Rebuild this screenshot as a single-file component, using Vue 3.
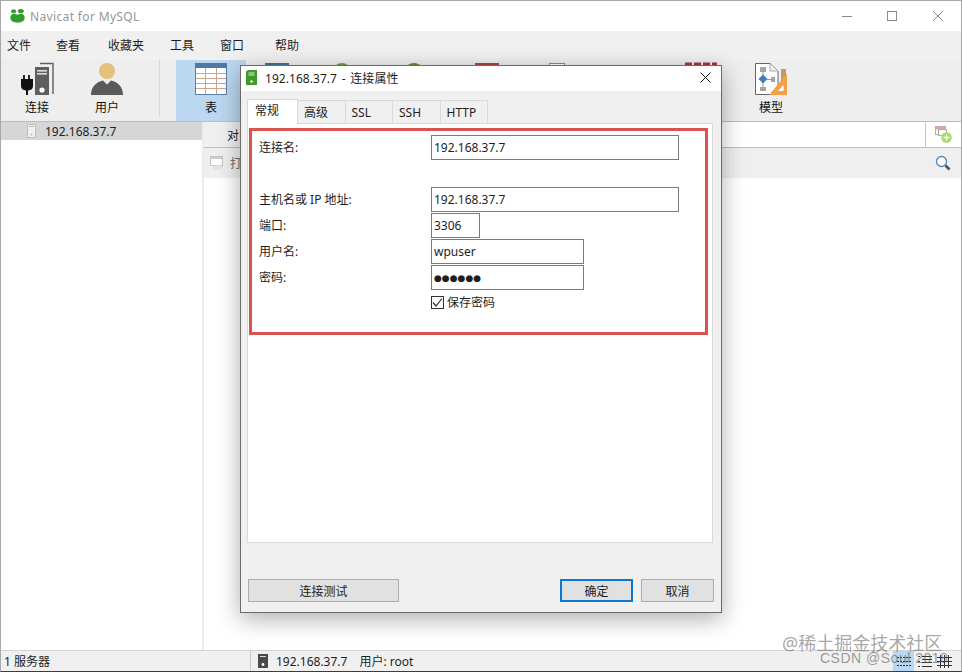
<script setup>
const menus = [
  { t: '文件', w: 49 }, { t: '查看', w: 52 }, { t: '收藏夹', w: 62 },
  { t: '工具', w: 50 }, { t: '窗口', w: 55 }, { t: '帮助', w: 30 }
]
const tabs = ['常规', '高级', 'SSL', 'SSH', 'HTTP']
const hostValue = '192.168.37.7'
</script>

<template>
  <div class="win">
    <header class="titlebar">
      <svg class="logo" width="15" height="14" viewBox="0 0 15 14">
        <path d="M0.3 9 Q0.5 5.5 4 4.6 Q7.5 6.8 11 4.6 Q14.5 5.5 14.7 9 Q14.2 13.6 7.5 13.7 Q0.8 13.6 0.3 9 Z" fill="#2f9e2f" />
        <ellipse cx="3.6" cy="2.2" rx="2.6" ry="1.9" fill="#2f9e2f" />
        <ellipse cx="10.8" cy="2" rx="3" ry="2" fill="#2f9e2f" />
      </svg>
      <span class="apptitle">Navicat for MySQL</span>
      <div class="winctl">
        <svg width="121" height="16" viewBox="0 0 121 16" fill="none" stroke="#8a8a8a">
          <path d="M10 8.5 H20" />
          <rect x="55.5" y="3.5" width="9" height="9" />
          <path d="M101 3 L111 13 M111 3 L101 13" />
        </svg>
      </div>
    </header>

    <nav class="menubar">
      <span v-for="m in menus" :key="m.t" class="menu" :style="{ width: m.w + 'px' }">{{ m.t }}</span>
    </nav>

    <section class="toolbar">
      <div class="tool">
        <svg width="48" height="36" viewBox="0 0 48 36">
          <path d="M27 2.5 H40 V33" fill="none" stroke="#5f5f5f" stroke-width="1.4" />
          <rect x="22" y="6" width="14" height="28" fill="#5e5e5e" />
          <rect x="24" y="9" width="10" height="1.6" fill="#ddd" />
          <rect x="24" y="12" width="10" height="1.6" fill="#ddd" />
          <circle cx="29" cy="29" r="2.6" fill="#fff" />
          <path d="M11 14 V18 M16 14 V18" stroke="#111" stroke-width="1.8" />
          <path d="M8 18 H20 V25 Q20 29 15 29.5 V34 H13 V29.5 Q8 29 8 25 Z" fill="#111" />
        </svg>
        <span>连接</span>
      </div>
      <div class="tool">
        <svg width="48" height="36" viewBox="0 0 48 36">
          <circle cx="24" cy="10" r="8" fill="#e4c07e" />
          <path d="M8 34 C8 26 13 21 20 19.5 L24 23.5 L28 19.5 C35 21 40 26 40 34 Z" fill="#5a5a5a" />
        </svg>
        <span>用户</span>
      </div>
      <i class="toolsep"></i>
      <div class="tool active">
        <svg width="48" height="36" viewBox="0 0 48 36">
          <rect x="8.5" y="2.5" width="31" height="31" fill="#fff" stroke="#5b7fa6" />
          <rect x="8" y="2" width="32" height="5" fill="#4f78a5" />
          <path d="M9 12.5 H39 M9 17.5 H39 M9 22.5 H39 M9 27.5 H39 M18.5 7 V33 M29.5 7 V33" stroke="#c9a58f" fill="none" />
        </svg>
        <span>表</span>
      </div>
      <div class="tool">
        <svg width="48" height="36" viewBox="0 0 48 36"><rect x="8" y="2" width="24" height="30" fill="#44709f" /></svg>
      </div>
      <div class="tool">
        <svg width="48" height="36" viewBox="0 0 48 36"><ellipse cx="15" cy="12" rx="10" ry="10" fill="#6d9a46" /></svg>
      </div>
      <div class="tool">
        <svg width="48" height="36" viewBox="0 0 48 36"><ellipse cx="17" cy="14" rx="11" ry="12" fill="#5f8f35" /></svg>
      </div>
      <div class="tool">
        <svg width="48" height="36" viewBox="0 0 48 36"><rect x="8" y="2" width="24" height="30" fill="#b3413f" /></svg>
      </div>
      <div class="tool">
        <svg width="48" height="36" viewBox="0 0 48 36"><rect x="12.5" y="2.5" width="15" height="30" fill="#fff" stroke="#888" /></svg>
      </div>
      <div class="tool"></div>
      <div class="tool">
        <svg width="48" height="36" viewBox="0 0 48 36"><path d="M8 3 H40" stroke="#a8323a" stroke-width="3" stroke-dasharray="7 2" /></svg>
      </div>
      <div class="tool">
        <svg width="48" height="36" viewBox="0 0 48 36">
          <path d="M8.5 2.5 H23 L31 10 V33.5 H8.5 Z" fill="#fff" stroke="#666" />
          <path d="M23 2.5 V10 H31" fill="#eee" stroke="#aaa" />
          <rect x="13" y="6" width="6" height="5" fill="#a5a5a5" />
          <rect x="24" y="16" width="4" height="5" fill="#a5a5a5" />
          <rect x="13" y="26" width="6" height="4" fill="#a5a5a5" />
          <path d="M16 11 V26 M20 18.5 H24" stroke="#999" />
          <path d="M16 13.5 L20.5 18 L16 22.5 L11.5 18 Z" fill="#3f7fc1" />
          <rect x="34" y="8" width="5" height="12" fill="#c49a6c" />
          <path d="M22 34 L40 34 L40 12.5 Z" fill="#f2a04a" />
          <path d="M31 30 L36.5 30 L36.5 24 Z" fill="#fff" />
        </svg>
        <span>模型</span>
      </div>
    </section>

    <main class="content">
      <aside class="tree">
        <div class="treerow">
          <svg width="10" height="14" viewBox="0 0 10 14">
            <rect x="0.5" y="0.5" width="8" height="13" fill="#f1f1f1" stroke="#bdbdbd" />
            <rect x="2" y="2" width="5" height="1" fill="#bbb" />
            <circle cx="4.5" cy="10.5" r="1" fill="#bbb" />
          </svg>
          <span>{{ hostValue }}</span>
        </div>
      </aside>
      <div class="pane">
        <div class="panetabs">
          <div class="objtab">对象</div>
          <div class="addcell">
            <svg width="17" height="17" viewBox="0 0 17 17">
              <rect x="0.5" y="0.5" width="10" height="8" fill="#fff" stroke="#b9a7a7" />
              <rect x="0.5" y="0.5" width="10" height="3" fill="#d7a8a8" />
              <rect x="3.5" y="3.5" width="8" height="6" fill="#fff" stroke="#aaa" />
              <circle cx="11.5" cy="11.5" r="5.2" fill="#a6d86a" />
              <path d="M11.5 8.5 V14.5 M8.5 11.5 H14.5" stroke="#fff" stroke-width="1.4" />
            </svg>
          </div>
        </div>
        <div class="panebar">
          <svg width="14" height="14" viewBox="0 0 14 14">
            <rect x="0.5" y="0.5" width="12" height="9" fill="#fff" stroke="#c4c4c4" />
            <rect x="1" y="1" width="11" height="2" fill="#cfcfcf" />
            <ellipse cx="8" cy="11.5" rx="5" ry="2.5" fill="#e4e4da" />
          </svg>
          <span class="opentext">打开表</span>
          <svg class="searchico" width="16" height="17" viewBox="0 0 16 17" fill="none">
            <circle cx="6.5" cy="6.5" r="5" fill="#fff" stroke="#4f86c6" stroke-width="1.3" />
            <path d="M10.5 10.5 L14.5 14.5" stroke="#555" stroke-width="2.6" />
          </svg>
        </div>
        <div class="panebody"></div>
      </div>
    </main>

    <footer class="status">
      <div class="st-left">1 服务器</div>
      <div class="st-mid">
        <svg width="10" height="14" viewBox="0 0 10 14">
          <rect width="10" height="14" fill="#4a4a4a" />
          <rect x="2" y="2" width="6" height="1" fill="#ddd" />
          <circle cx="5" cy="10.5" r="1.4" fill="#fff" />
        </svg>
        <span class="st-host">{{ hostValue }}</span>
        <span>用户: root</span>
      </div>
      <div class="st-views">
        <span class="vbtn on">
          <svg width="14" height="13" viewBox="0 0 14 13" stroke="#333" stroke-dasharray="2 1" fill="none">
            <path d="M0 2.5 H14 M0 6.5 H14 M0 10.5 H14" />
          </svg>
        </span>
        <span class="vbtn">
          <svg width="15" height="13" viewBox="0 0 15 13" stroke="#333" fill="none">
            <path d="M5 1.5 H15 M5 4.5 H15 M5 7.5 H15 M5 11.5 H15 M1 1.5 H3 M1 6.5 H3 M1 11.5 H3" />
          </svg>
        </span>
        <span class="vbtn">
          <svg width="15" height="13" viewBox="0 0 15 13" stroke="#333" fill="none">
            <path d="M0 2.5 H15 M0 6.5 H15 M0 10.5 H15 M3.5 0 V13 M7.5 0 V13 M11.5 0 V13" />
          </svg>
        </span>
      </div>
    </footer>

    <div class="mark mark1">@稀土掘金技术社区</div>
    <div class="mark mark2">CSDN @Soul 2018</div>

    <div class="dialog">
      <div class="dlgtitle">
        <svg width="11" height="15" viewBox="0 0 11 15">
          <path d="M0 1.5 L2 0 H11 V15 H0 Z" fill="#3f9a2c" />
          <rect x="2.5" y="2.5" width="6" height="1" fill="#d6efc9" />
          <rect x="2.5" y="4.5" width="6" height="1" fill="#d6efc9" />
          <circle cx="5.5" cy="11.5" r="1.3" fill="#fff" />
        </svg>
        <span class="dlgtext">192.168.37.7 - 连接属性</span>
        <svg class="dlgclose" width="11" height="11" viewBox="0 0 11 11" stroke="#111" fill="none">
          <path d="M0.5 0.5 L10.5 10.5 M10.5 0.5 L0.5 10.5" />
        </svg>
      </div>
      <div class="dlgbody">
        <div class="tabs">
          <div v-for="(t, i) in tabs" :key="t" class="tab" :class="{ on: i === 0 }">{{ t }}</div>
        </div>
        <div class="panel">
          <div class="redbox">
            <div class="form">
              <label>连接名:</label>
              <input class="in wide" :value="hostValue" readonly />
              <div class="spacer"></div>
              <label>主机名或 IP 地址:</label>
              <input class="in wide" :value="hostValue" readonly />
              <label>端口:</label>
              <input class="in port" value="3306" readonly />
              <label>用户名:</label>
              <input class="in mid" value="wpuser" readonly />
              <label>密码:</label>
              <input class="in mid dots" value="●●●●●●" readonly />
              <div class="label-empty"></div>
              <div class="check">
                <span class="box">
                  <svg width="11" height="11" viewBox="0 0 11 11" fill="none" stroke="#333" stroke-width="1.2">
                    <path d="M1 5.5 L4 9 L10 1.5" />
                  </svg>
                </span>
                <span>保存密码</span>
              </div>
            </div>
          </div>
        </div>
        <div class="dlgfoot">
          <button class="btn test">连接测试</button>
          <button class="btn act primary">确定</button>
          <button class="btn act">取消</button>
        </div>
      </div>
    </div>
  </div>
</template>

<style>
html, body { margin: 0; padding: 0; background: #fff; }
</style>

<style scoped>
.win {
  position: relative;
  box-sizing: border-box;
  width: 962px;
  height: 672px;
  display: flex;
  flex-direction: column;
  overflow: hidden;
  background: #fff;
  border: 1px solid #a8a8a8;
  border-bottom-color: #3c3c3c;
  font: 12px "Noto Sans", "Noto Sans CJK SC", sans-serif;
  color: #1e1e1e;
}
.titlebar { height: 30px; flex: none; display: flex; align-items: center; padding-left: 9px; }
.logo { flex: none; }
.apptitle { margin-left: 5px; color: #979797; letter-spacing: 0.35px; }
.winctl { margin-left: auto; margin-right: 8px; display: flex; }
.menubar {
  height: 29px; flex: none; display: flex; align-items: center; box-sizing: border-box;
  padding: 0 0 2px 6px; background: #f0f0f0;
}
.menu { flex: none; white-space: nowrap; }
.toolbar {
  height: 62px; box-sizing: border-box; flex: none; display: flex;
  padding-left: 1px; background: #eeeeee; border-bottom: 1px solid #bdbdbd;
}
.tool {
  width: 70px; flex: none; display: flex; flex-direction: column; align-items: center;
  padding-top: 1px; box-sizing: border-box; color: #111;
}
.tool svg { flex: none; }
.tool span { line-height: 17px; margin-top: auto; margin-bottom: 5px; }
.tool.active { background: #bcd7f0; }
.toolsep { width: 1px; margin: 0 16px 4px 17px; flex: none; background: #d8d8d8; align-self: stretch; }

.content { flex: 1; display: flex; min-height: 0; }
.tree { width: 201px; flex: none; border-right: 2px solid #ececec; box-sizing: content-box; }
.treerow {
  height: 18px; background: #d6d6d6; display: flex; align-items: center;
  padding-left: 26px; gap: 8px;
}
.pane { flex: 1; display: flex; flex-direction: column; min-width: 0; }
.panetabs {
  height: 26px; box-sizing: border-box; flex: none; display: flex; align-items: stretch;
  border-bottom: 1px solid #bfbfbf; background: #fff;
}
.objtab {
  width: 60px; padding-left: 23px; box-sizing: border-box; background: #f0f0f0;
  display: flex; align-items: center;
}
.addcell {
  margin-left: auto; width: 36px; box-sizing: border-box; border-left: 1px solid #c4c4c4;
  display: flex; align-items: center; justify-content: center;
}
.panebar {
  height: 30px; flex: none; display: flex; align-items: center; background: #efefef;
  padding: 0 10px 0 6px;
}
.opentext { margin-left: 6px; color: #6e6e6e; }
.searchico { margin-left: auto; }
.panebody { flex: 1; background: #fff; }

.status {
  height: 21px; flex: none; display: flex; align-items: center; background: #f0f0f0;
  border-top: 1px solid #d4d4d4; box-sizing: border-box;
}
.st-left { width: 249px; flex: none; padding-left: 3px; box-sizing: border-box; }
.st-mid {
  display: flex; align-items: center; height: 100%; box-sizing: border-box;
  border-left: 1px solid #c8c8c8; padding-left: 7px;
}
.st-host { margin: 0 12px 0 8px; }
.st-views { margin-left: auto; display: flex; align-items: center; height: 100%; margin-right: 7px; gap: 1px; }
.vbtn { width: 19px; height: 100%; display: flex; align-items: center; justify-content: center; }
.vbtn.on { background: #b7d7f2; width: 21px; }

.mark { position: absolute; white-space: nowrap; pointer-events: none; }
.mark1 { left: 781px; top: 631px; font-size: 18px; line-height: 22px; color: rgba(110, 110, 110, 0.62); }
.mark2 { left: 819px; top: 648px; font-size: 14px; line-height: 18px; letter-spacing: 0.5px; color: rgba(90, 90, 90, 0.6); font-family: "Liberation Sans", sans-serif; }

.dialog {
  position: absolute; left: 239px; top: 64px; width: 482px; height: 548px;
  box-sizing: border-box; border: 1px solid #6a6a6a; background: #f0f0f0;
  box-shadow: 0 6px 22px rgba(0, 0, 0, 0.32);
  display: flex; flex-direction: column;
}
.dlgtitle { height: 25px; flex: none; box-sizing: border-box; background: #fff; display: flex; align-items: center; padding: 0 10px 2px 5px; }
.dlgtext { margin-left: 8px; word-spacing: 1.5px; letter-spacing: 0.05px; }
.dlgclose { margin-left: auto; }
.dlgbody { flex: 1; display: flex; flex-direction: column; padding: 8px 8px 0 6px; min-height: 0; }
.tabs { height: 24px; flex: none; display: flex; align-items: flex-end; }
.tab {
  height: 23px; box-sizing: border-box; width: 47.5px;
  border: 1px solid #d9d9d9; border-left-width: 0; background: #f0f0f0; border-bottom: 0;
  display: flex; align-items: center; padding-left: 6px;
}
.tab.on {
  height: 25px; width: 51px; background: #fff; border-left-width: 1px;
  padding-left: 7px; align-items: flex-start; padding-top: 1px; margin-bottom: -1px;
  position: relative; z-index: 1;
}
.panel {
  height: 420px; flex: none; box-sizing: border-box; background: #fff;
  border: 1px solid #d9d9d9; padding: 4px 0 0 1px;
}
.redbox {
  width: 459px; height: 207px; box-sizing: border-box;
  border: 3px solid #d8524e; padding: 4px 0 0 7px;
}
.form { display: grid; grid-template-columns: 172px 1fr; grid-auto-rows: 26px; align-items: start; }
.form label { line-height: 25px; }
.spacer { grid-column: 1 / -1; }
.in {
  display: block; box-sizing: border-box; height: 25px; padding: 0 2px; margin: 0;
  border: 1px solid #7a7a7a; outline: none; background: #fff;
  font: inherit; color: #1e1e1e; border-radius: 0;
}
.wide { width: 248px; }
.port { width: 49px; }
.mid { width: 153px; }
.dots { font-family: "DejaVu Sans", sans-serif; font-size: 9px; }
.check { display: flex; align-items: center; gap: 3px; margin-top: 4px; height: 14px; }
.box {
  width: 13px; height: 13px; box-sizing: border-box; border: 1px solid #333; background: #fff;
  display: flex; align-items: center; justify-content: center;
}
.dlgfoot { display: flex; margin: 36px -1px 0 1px; }
.btn {
  height: 23px; box-sizing: border-box; padding: 0; margin: 0; background: #e1e1e1;
  border: 1px solid #adadad; font: inherit; color: #1e1e1e; border-radius: 0;
}
.test { width: 151px; margin-right: auto; }
.act { width: 73px; margin-left: 8px; }
.primary { border: 2px solid #0a78d2; }
</style>
